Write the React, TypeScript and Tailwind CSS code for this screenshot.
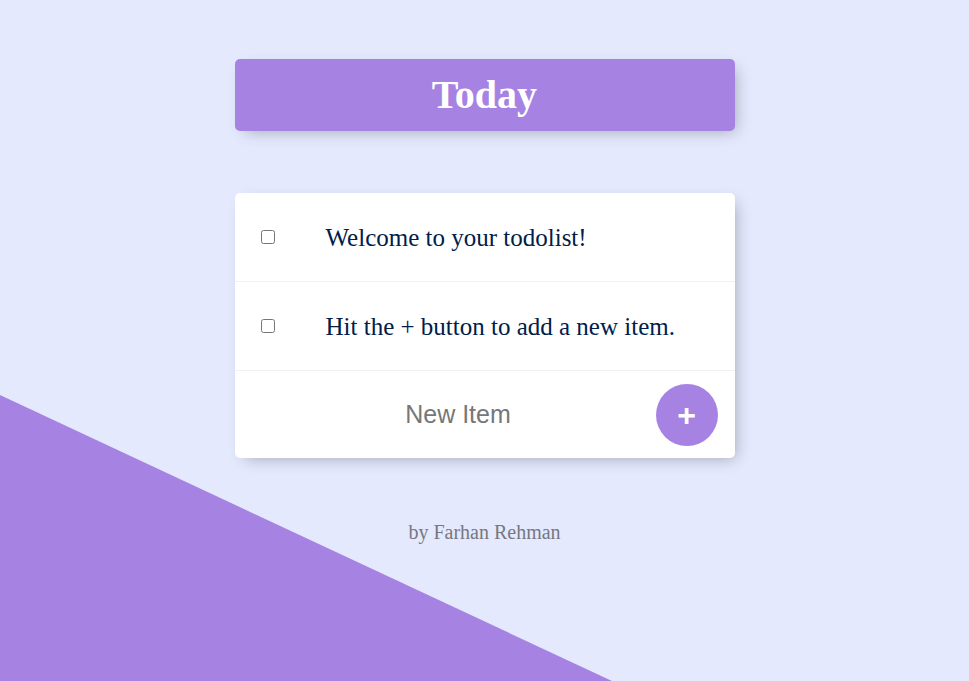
import React from "react";

export default function App() {
  return (
    <div className="relative h-[681px] w-full overflow-hidden bg-[#E4E9FD]">
      <div className="absolute left-0 bottom-0 h-[286px] w-[612px] bg-[#A683E3] [clip-path:polygon(0_0,0_100%,100%_100%)]" />
      <div className="relative flex flex-col items-center pt-[59px]">
        <div className="flex h-[72px] w-[500px] items-center justify-center rounded-[5px] bg-[#A683E3] shadow-[5px_5px_15px_-5px_rgba(0,0,0,0.3)]">
          <h1 className="font-['Liberation_Serif',serif] text-[40px] font-bold leading-none text-white">Today</h1>
        </div>
        <div className="mt-[62px] w-[500px] rounded-[5px] bg-white shadow-[5px_5px_15px_-5px_rgba(0,0,0,0.3)]">
          {["Welcome to your todolist!", "Hit the + button to add a new item."].map((t) => (
            <div key={t} className="flex h-[89px] items-center border-b border-[#F1F1F1]">
              <input type="checkbox" className="ml-[26px] h-[14px] w-[14px]" />
              <p className="ml-[51px] font-['Liberation_Serif',serif] text-[25px] leading-none text-[#00204a]">{t}</p>
            </div>
          ))}
          <div className="flex h-[87px] items-center">
            <input
              type="text"
              placeholder="New Item"
              className="ml-[67px] w-[313px] bg-transparent text-center font-['Liberation_Sans',Arial,sans-serif] text-[25px] text-[#555] outline-none placeholder:text-[#777]"
            />
            <button className="ml-auto mr-[17px] flex h-[62px] w-[62px] items-center justify-center rounded-full bg-[#A683E3] font-['Liberation_Sans',Arial,sans-serif] text-[32px] font-bold leading-none text-white">
              +
            </button>
          </div>
        </div>
        <footer className="mt-[59px] font-['Liberation_Serif',serif] text-[20px] text-[#76777f]">by Farhan Rehman</footer>
      </div>
    </div>
  );
}
